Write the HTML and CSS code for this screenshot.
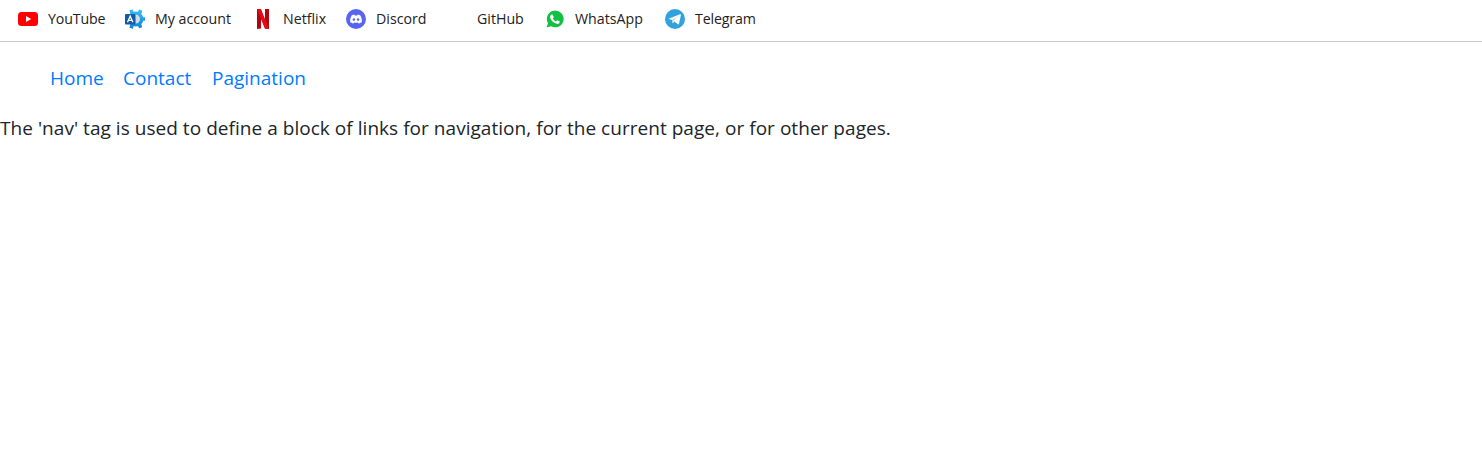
FILE: index.html
```html
<!DOCTYPE html>
<html lang="en">
<head>
<meta charset="utf-8">
<title>Nav</title>
<link rel="stylesheet" href="styles.css">
</head>
<body>
<header class="bookmarks">
  <a class="bookmark youtube"><svg class="icon" viewBox="0 0 20 20"><rect y="3" width="20" height="14" rx="3.5" fill="#f00"/><path d="M8 7v6l5.2-3z" fill="#fff"/></svg><span>YouTube</span></a>
  <a class="bookmark account"><svg class="icon" viewBox="0 0 20 20">
    <defs><linearGradient id="gear" gradientUnits="userSpaceOnUse" x1="0" y1="0" x2="0" y2="20"><stop stop-color="#35c0f1"/><stop offset="1" stop-color="#1580d6"/></linearGradient></defs>
    <circle cx="10.8" cy="10" r="7.6" fill="url(#gear)"/>
    <path d="M6.2.8 7.2 5M15.6 1.2 14.3 5M20 10h-3M15.6 18.8l-1.3-4M6.2 19.2l1-4" stroke="url(#gear)" stroke-width="3.6" fill="none"/>
    <path d="M10 5.5a4.5 4.5 0 0 1 0 9z" transform="translate(.5)" fill="#cfdee8"/><rect y="5" width="10.3" height="10.5" rx="1" fill="#0f5cab"/><path d="M2.5 13.2 5.2 7.2 7.9 13.2M3.6 11.3h3.2" fill="none" stroke="#fff" stroke-width="1.3"/></svg><span>My account</span></a>
  <a class="bookmark netflix"><svg class="icon" viewBox="0 0 20 20"><path d="M4 0h4v19.5L4 20zM12 0h4v20l-4-.5z" fill="#b1060f"/><path d="M4 0h4l8 20-4.3-.5z" fill="#e50914"/></svg><span>Netflix</span></a>
  <a class="bookmark discord"><svg class="icon" viewBox="0 0 20 20"><circle cx="10" cy="10" r="10" fill="#5865f2"/><path d="M8.2 5.5 5.8 6.2C4.5 8.4 4 10.5 4.1 13c1.1.9 2.1 1.3 3.2 1.6l.8-1.2c1.3.3 2.5.3 3.8 0l.8 1.2c1.1-.3 2.1-.7 3.2-1.6.1-2.5-.4-4.6-1.7-6.8l-2.4-.7-.6 1H8.8z" fill="#fff"/><ellipse cx="7.9" cy="10.6" rx="1.2" ry="1.4" fill="#5865f2"/><ellipse cx="12.1" cy="10.6" rx="1.2" ry="1.4" fill="#5865f2"/></svg><span>Discord</span></a>
  <a class="bookmark github"><svg class="icon" viewBox="0 0 20 20"></svg><span>GitHub</span></a>
  <a class="bookmark whatsapp"><svg class="icon" viewBox="0 0 20 20"><path d="M1.5 18.5 3 14.2A8.4 8.4 0 1 1 6.2 17.3z" fill="#12c144"/><path d="M6.1 5.8 7.4 5.5 8.8 8.3 7.8 9.5C8.6 11 9.5 11.9 11 12.4l1.2-1.2 2.6 1.3c.1 1.2-.8 2.3-2.2 2.4C9 14.8 5.3 11 5.1 8.1c0-.9.3-1.7 1-2.3z" fill="#fff"/></svg><span>WhatsApp</span></a>
  <a class="bookmark telegram"><svg class="icon" viewBox="0 0 20 20"><circle cx="10" cy="10" r="10" fill="#30a3df"/><path d="M3.5 9.8 15 5.2c.6-.2 1 .1.9.8l-1.9 8.8c-.1.6-.6.8-1.1.4L9.3 12.4l-1.6 2.2-.8-3.5z" fill="#fff"/><path d="m7 11.2 6.1-4.1-4.7 4.7-.5 2.4z" fill="#a9cce5"/></svg><span>Telegram</span></a>
</header>
<nav class="links">
  <a class="home" href="#">Home</a><a class="contact" href="#">Contact</a><a class="pagination" href="#">Pagination</a>
</nav>
<p class="description">The 'nav' tag is used to define a block of links for navigation, for the current page, or for other pages.</p>
</body>
</html>
```
FILE: styles.css
```css
body { margin: 0; background: #fff; color: #212529; font-family: "Open Sans", "Noto Sans", sans-serif; font-size: 19px; line-height: 30px; }
.bookmarks { box-sizing: border-box; height: 42px; padding: 0 0 4px 18px; border-bottom: 1px solid #c8c8c8; display: flex; align-items: center; color: #222; font-size: 14.2px; line-height: 20px; }
.bookmark { display: flex; align-items: center; gap: 10px; flex: none; white-space: nowrap; }
.icon { width: 20px; height: 20px; flex: none; display: block; }
.youtube { width: 107px; }
.youtube span, .telegram span { letter-spacing: -0.15px; }
.account { width: 128px; }
.netflix { width: 93px; }
.discord { width: 101px; }
.github { width: 98px; }
.whatsapp { width: 120px; }
.links { display: flex; height: 30px; padding: 21px 0 0 50px; white-space: nowrap; }
.links a { color: #007bff; text-decoration: none; }
.home { width: 73px; }
.contact { width: 89px; }
.description { margin: 20px 0 0; white-space: nowrap; letter-spacing: 0.04px; }
```
